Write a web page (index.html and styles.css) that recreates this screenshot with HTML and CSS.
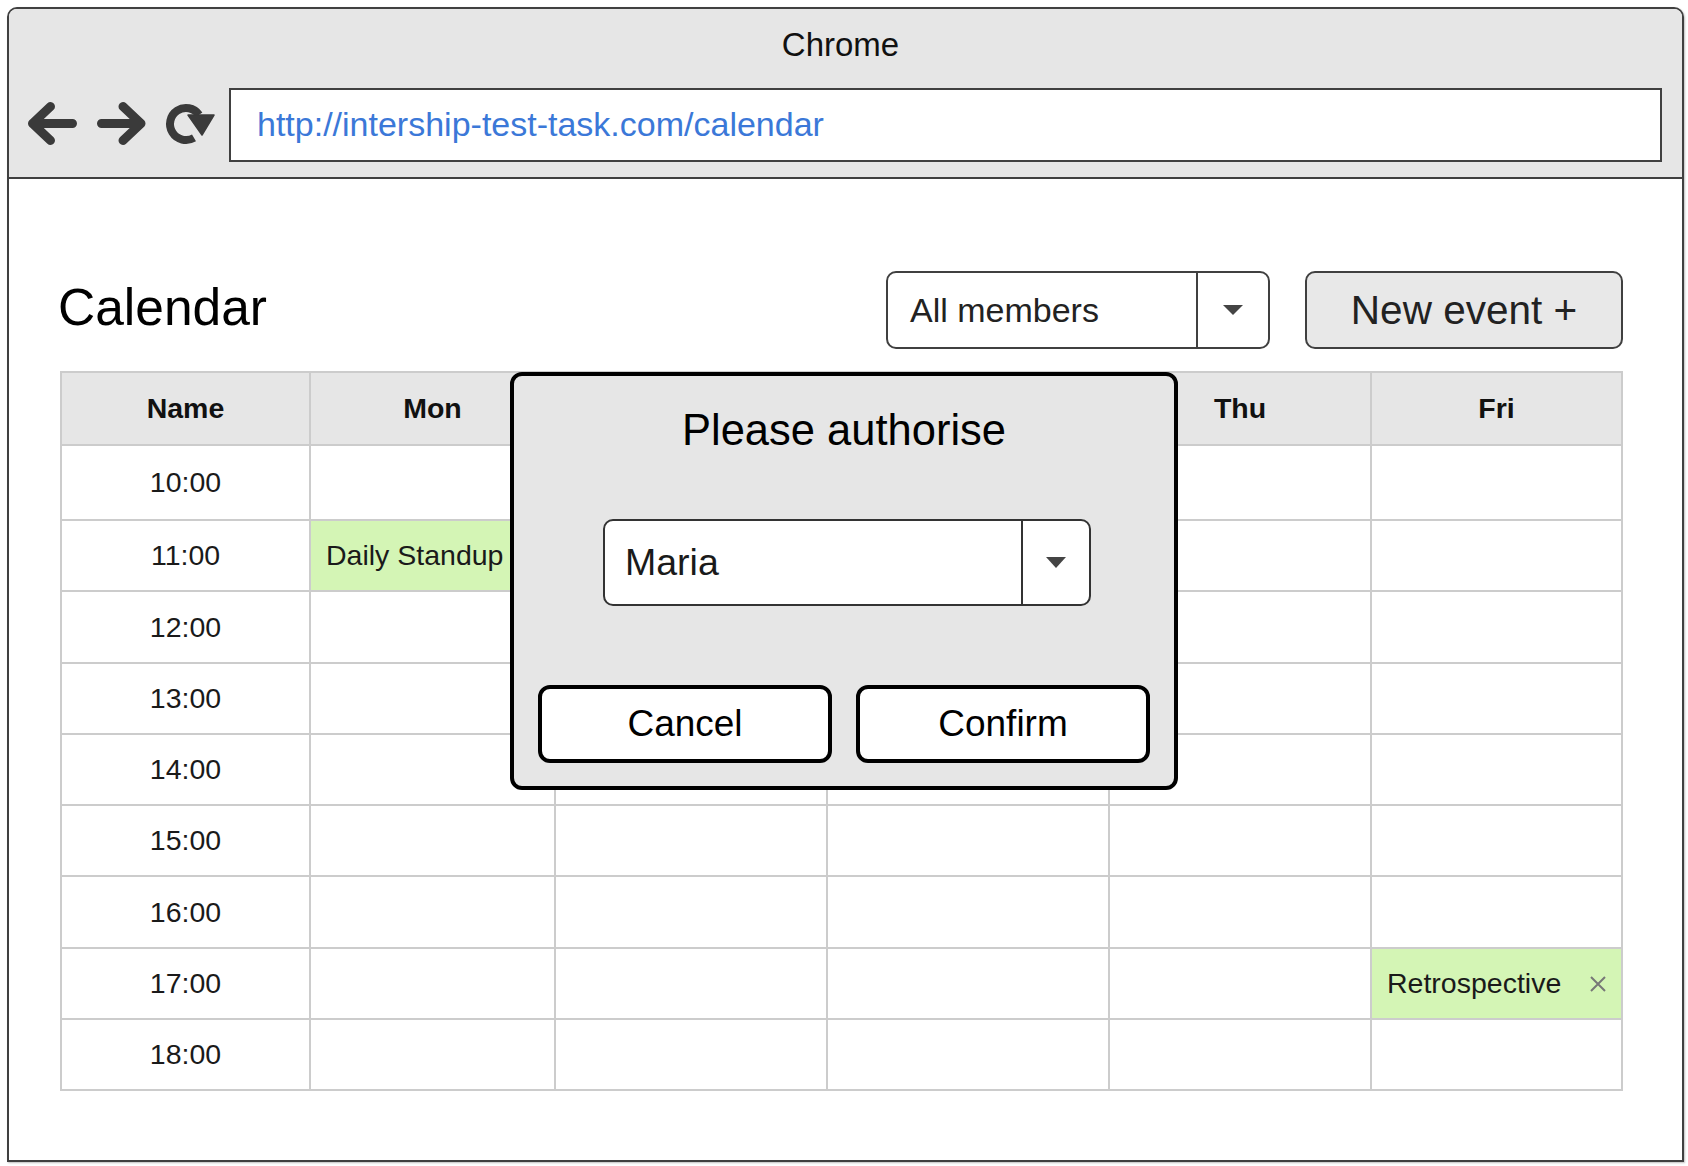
FILE: index.html
```html
<!DOCTYPE html>
<html lang="en">
<head>
<meta charset="utf-8">
<title>Calendar</title>
<link rel="stylesheet" href="styles.css">
</head>
<body>
<div class="window">
  <header class="topbar">
    <div class="browser-title">Chrome</div>
    <div class="navrow">
      <svg class="nav-icons" width="220" height="74" viewBox="0 0 220 74" aria-hidden="true">
        <g fill="none" stroke="#3a3a3a" stroke-width="9" stroke-linecap="round" stroke-linejoin="round">
          <path d="M23.5 35.5 H63.5 M41.5 18.5 L23.5 35.5 L41.5 52.5"/>
          <path d="M92.5 35.5 H132 M114 18.5 L132 35.5 L114 52.5"/>
        </g>
        <path d="M190.1 26.8 A16 16 0 1 0 185 49.9" fill="none" stroke="#3a3a3a" stroke-width="8"/>
        <path d="M179 27 L205 27 L193 47 Z" fill="#3a3a3a" stroke="#3a3a3a" stroke-width="1.5" stroke-linejoin="round"/>
      </svg>
      <div class="address">http://intership-test-task.com/calendar</div>
    </div>
  </header>

  <main class="page">
    <div class="toolbar">
      <h1 class="heading">Calendar</h1>
      <div class="controls">
        <div class="select select-members">
          <span class="select-value">All members</span>
          <span class="select-btn"><span class="caret"></span></span>
        </div>
        <button class="btn-new">New event +</button>
      </div>
    </div>

    <div class="calendar">
      <div class="grid">
        <div class="cell head">Name</div>
        <div class="cell head">Mon</div>
        <div class="cell head">Tue</div>
        <div class="cell head">Wed</div>
        <div class="cell head">Thu</div>
        <div class="cell head">Fri</div>

        <div class="cell time">10:00</div>
        <div class="cell"></div><div class="cell"></div><div class="cell"></div><div class="cell"></div><div class="cell"></div>

        <div class="cell time">11:00</div>
        <div class="cell event"><span>Daily Standup</span><span class="close"><svg width="18" height="18" viewBox="0 0 18 18"><path d="M2 2 L16 16 M16 2 L2 16" stroke="#777" stroke-width="2"/></svg></span></div>
        <div class="cell"></div><div class="cell"></div><div class="cell"></div><div class="cell"></div>

        <div class="cell time">12:00</div>
        <div class="cell"></div><div class="cell"></div><div class="cell"></div><div class="cell"></div><div class="cell"></div>

        <div class="cell time">13:00</div>
        <div class="cell"></div><div class="cell"></div><div class="cell"></div><div class="cell"></div><div class="cell"></div>

        <div class="cell time">14:00</div>
        <div class="cell"></div><div class="cell"></div><div class="cell"></div><div class="cell"></div><div class="cell"></div>

        <div class="cell time">15:00</div>
        <div class="cell"></div><div class="cell"></div><div class="cell"></div><div class="cell"></div><div class="cell"></div>

        <div class="cell time">16:00</div>
        <div class="cell"></div><div class="cell"></div><div class="cell"></div><div class="cell"></div><div class="cell"></div>

        <div class="cell time">17:00</div>
        <div class="cell"></div><div class="cell"></div><div class="cell"></div><div class="cell"></div>
        <div class="cell event"><span>Retrospective</span><span class="close"><svg width="18" height="18" viewBox="0 0 18 18"><path d="M2 2 L16 16 M16 2 L2 16" stroke="#777" stroke-width="2"/></svg></span></div>

        <div class="cell time">18:00</div>
        <div class="cell"></div><div class="cell"></div><div class="cell"></div><div class="cell"></div><div class="cell"></div>
      </div>

      <div class="dialog" role="dialog">
        <div class="dialog-title">Please authorise</div>
        <div class="select select-user">
          <span class="select-value">Maria</span>
          <span class="select-btn"><span class="caret caret-lg"></span></span>
        </div>
        <div class="dialog-actions">
          <button class="btn-outline">Cancel</button>
          <button class="btn-outline">Confirm</button>
        </div>
      </div>
    </div>
  </main>
</div>
</body>
</html>
```

FILE: styles.css
```css
* { box-sizing: border-box; }

html, body {
  margin: 0;
  padding: 0;
  background: #ffffff;
}

body {
  font-family: "Liberation Sans", Arial, Helvetica, sans-serif;
  color: #111;
  width: 1688px;
  height: 1166px;
  overflow: hidden;
}

.window {
  margin: 7px 0 0 7px;
  width: 1677px;
  height: 1155px;
  border: 2px solid #404040;
  border-radius: 10px 10px 0 0;
  box-shadow: 1px 1px 2px rgba(0, 0, 0, 0.25);
  background: #fff;
  overflow: hidden;
}

/* ---------- browser chrome ---------- */
.topbar {
  background: #e6e6e6;
  border-bottom: 2px solid #404040;
  padding: 20px 0 15px 0;
  height: 170px;
}

.browser-title {
  font-size: 33px;
  line-height: 32px;
  text-align: center;
  color: #111;
  padding-right: 10px;
}

.navrow {
  margin-top: 27px;
  display: flex;
  align-items: stretch;
  height: 74px;
}

.nav-icons {
  display: block;
  flex: 0 0 220px;
}

.address {
  width: 1433px;
  height: 74px;
  border: 2px solid #404040;
  background: #fff;
  color: #3b78d8;
  font-size: 34px;
  display: flex;
  align-items: center;
  padding: 0 0 1px 26px;
}

/* ---------- page ---------- */
.page {
  padding: 92px 59px 0 51px;
}

.toolbar {
  display: flex;
  justify-content: space-between;
  align-items: center;
  height: 78px;
  margin-bottom: 22px;
}

.heading {
  margin: 0 0 7px -2px;
  font-size: 51.5px;
  line-height: 50px;
  font-weight: normal;
  color: #000;
}

.controls {
  display: flex;
  gap: 35px;
  height: 78px;
}

.select {
  display: flex;
  align-items: stretch;
  background: #fff;
  border: 2px solid #404040;
  border-radius: 10px;
}

.select-value {
  flex: 1;
  display: flex;
  align-items: center;
}

.select-btn {
  display: flex;
  align-items: center;
  justify-content: center;
  border-left: 2px solid #404040;
  background: transparent;
}

.caret {
  width: 0;
  height: 0;
  border-left: 10px solid transparent;
  border-right: 10px solid transparent;
  border-top: 10px solid #444;
}

.caret-lg {
  border-top-width: 11px;
}

.select-members {
  width: 384px;
  height: 78px;
  font-size: 34px;
  color: #222;
}

.select-members .select-value {
  padding-left: 22px;
}

.select-members .select-btn {
  width: 72px;
}

.btn-new {
  width: 318px;
  height: 78px;
  font-family: inherit;
  font-size: 40.5px;
  color: #222;
  background: #e8e8e8;
  border: 2px solid #404040;
  border-radius: 10px;
  padding: 0;
}

/* ---------- calendar grid ---------- */
.calendar {
  position: relative;
  width: 1563px;
}

.grid {
  display: grid;
  grid-template-columns: 249px 245px 272px 282px 262px 251px;
  grid-template-rows: 73px 75px 71px 72px 71px 71px 71px 72px 71px 71px;
  border-left: 2px solid #cccccc;
  border-top: 2px solid #cccccc;
}

.cell {
  border-right: 2px solid #cccccc;
  border-bottom: 2px solid #cccccc;
  display: flex;
  align-items: center;
  justify-content: center;
  font-size: 28.5px;
  color: #1a1a1a;
  background: #fff;
}

.head {
  background: #e6e6e6;
  font-weight: bold;
  color: #111;
}

.event {
  background: #d4f5b5;
  justify-content: space-between;
  padding: 0 14px 0 15px;
  white-space: nowrap;
}

.close {
  display: flex;
  align-items: center;
}

/* ---------- modal dialog ---------- */
.dialog {
  position: absolute;
  left: 450px;
  top: 1px;
  width: 668px;
  height: 418px;
  background: #e6e6e6;
  border: 4px solid #000;
  border-radius: 12px;
  padding: 33px 24px 0 24px;
  display: flex;
  flex-direction: column;
}

.dialog-title {
  font-size: 43.5px;
  line-height: 43px;
  text-align: center;
  color: #000;
}

.select-user {
  margin: 67px 0 0 65px;
  width: 488px;
  height: 87px;
  font-size: 37.5px;
  color: #1a1a1a;
  border-color: #333;
}

.select-user .select-value {
  padding-left: 20px;
}

.select-user .select-btn {
  width: 68px;
  border-left-color: #333;
}

.dialog-actions {
  margin-top: 79px;
  display: flex;
  gap: 24px;
}

.btn-outline {
  flex: 1;
  height: 78px;
  background: #fff;
  border: 4px solid #000;
  border-radius: 12px;
  font-family: inherit;
  font-size: 37px;
  color: #000;
  padding: 0;
}
```
